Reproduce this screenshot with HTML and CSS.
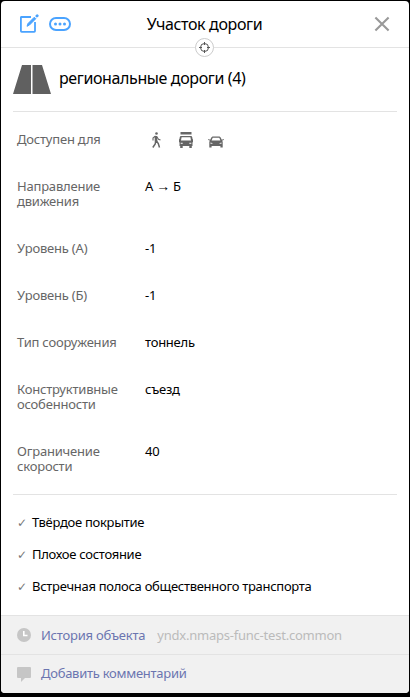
FILE: index.html
```
<!DOCTYPE html>
<html lang="ru">
<head>
<meta charset="utf-8">
<title>Участок дороги</title>
<link rel="stylesheet" href="styles.css">
</head>
<body>
<main class="card">
  <header class="header">
    <div class="actions">
      <svg width="20" height="20" viewBox="0 0 20 20" fill="none" stroke="#4aa3ff" stroke-width="1.800"><path d="M12 3H2.200Q1.900 3 1.900 3.400V17q0 .9.8.9h12.500q.8 0 .8-.9V8"/><path d="M8 12.300l1-2.800 6.300-6.300 1.500 1.500-6.300 6.300z" fill="#4aa3ff" stroke-width="1"/><path d="M17.900 2.100l.3-.3" stroke-width="2.800" stroke-linecap="round"/></svg>
      <svg width="22" height="14" viewBox="0 0 22 14"><rect x="1" y="1" width="20" height="12" rx="6" fill="none" stroke="#4aa3ff" stroke-width="2"/><g fill="#4aa3ff"><circle cx="6.500" cy="7" r="1.500"/><circle cx="11" cy="7" r="1.500"/><circle cx="15.500" cy="7" r="1.500"/></g></svg>
    </div>
    <h1 class="title">Участок дороги</h1>
    <svg class="close" width="16" height="16" viewBox="0 0 16 16" stroke="#999" stroke-width="2.100"><path d="M1.400 1.400l13.200 13.200M14.600 1.400L1.400 14.600"/></svg>
    <span class="locate"><svg width="11" height="11" viewBox="0 0 11 11" fill="none" stroke="#555"><circle cx="5.500" cy="5.500" r="4"/><path d="M5.500 0v3M5.500 8v3M0 5.500h3M8 5.500h3"/></svg></span>
  </header>

  <section class="category">
    <svg width="38" height="29" viewBox="0 0 38 29" fill="#606060"><path d="M9 0h9v29H0zM19.500 0H29l9 29H19.500z"/></svg>
    <h2 class="category-name">региональные дороги (4)</h2>
  </section>

  <dl class="attributes">
    <div class="row"><dt>Доступен для</dt><dd class="modes">
      <svg width="20" height="20" viewBox="0 0 20 20" fill="none" stroke="#666"><circle cx="10.500" cy="3.500" r="1.300" fill="#666" stroke="none"/><path d="M10 6v5.500" stroke-width="2.600"/><path d="M9.500 6L7 8v2.500M11 7l1.500 2.300 2 .7" stroke-width="1.100"/><path d="M9.700 11l-.5 3-2.400 3.500M10.500 11l1.800 2.500 1.200 4" stroke-width="1.500"/></svg>
      <svg width="20" height="20" viewBox="0 0 20 20" fill="#666"><path d="M4.500 2h11v2.500h-11zM5 6h10q1 0 1.200 1l.4 2.200h.4v3h-.5V16h-.7v2h-2.500v-2H6.700v2H4.200v-2h-.7v-3.800H3v-3h.4L3.800 7Q4 6 5 6z"/><path d="M5.600 7.300h8.800l.6 3.300H5z" fill="#fff"/><path d="M4.700 12.700h2v1.300h-2zM13.300 12.700h2v1.300h-2z" fill="#ddd"/></svg>
      <svg width="20" height="20" viewBox="0 0 20 20" fill="#666"><path d="M6.500 6.500h7l1 .7 1.300 2.500L17.800 9v1l-1.600.6.5 1.400v5.500h-2.300V16H5.600v1.500H3.300V12l.5-1.400L2.200 10V9l2 .7 1.300-2.500z"/><path d="M6.700 7.800h6.600l1.100 2.700H5.600z" fill="#fff"/><path d="M4.400 12.500l2 .4v1l-2-.2zM15.600 12.500l-2 .4v1l2-.2z" fill="#ddd"/></svg>
    </dd></div>
    <div class="row"><dt>Направление движения</dt><dd>А <span class="arrow">→</span> Б</dd></div>
    <div class="row"><dt>Уровень (А)</dt><dd>-1</dd></div>
    <div class="row"><dt>Уровень (Б)</dt><dd>-1</dd></div>
    <div class="row"><dt>Тип сооружения</dt><dd>тоннель</dd></div>
    <div class="row"><dt>Конструктивные особенности</dt><dd>съезд</dd></div>
    <div class="row"><dt>Ограничение скорости</dt><dd>40</dd></div>
  </dl>

  <ul class="flags">
    <li><span class="check">✓</span>Твёрдое покрытие</li>
    <li><span class="check">✓</span>Плохое состояние</li>
    <li><span class="check">✓</span>Встречная полоса общественного транспорта</li>
  </ul>

  <footer class="footer">
    <div class="footer-row">
      <svg width="14" height="14" viewBox="0 0 14 14"><circle cx="7" cy="7" r="7" fill="#c6c6c6"/><path d="M6.800 3v4.500H10.500" fill="none" stroke="#fff" stroke-width="1.600"/></svg>
      <a class="link">История объекта</a><span class="author">yndx.nmaps-func-test.common</span>
    </div>
    <div class="footer-row">
      <svg width="14" height="15" viewBox="0 0 14 15" fill="#c6c6c6"><path d="M1 0h12q1 0 1 1v9q0 1-1 1H8l-4 4v-4H1q-1 0-1-1V1q0-1 1-1z"/></svg>
      <a class="link comment">Добавить комментарий</a>
    </div>
  </footer>
</main>
</body>
</html>
```
FILE: styles.css
```
* { box-sizing: border-box; }
body {
  margin: 0;
  height: 697px;
  padding: 1px 1px 4px;
  background: #000;
  font: 13px/15px "Noto Sans", "DejaVu Sans", sans-serif;
  color: #000;
}
svg { display: block; flex: none; }
h1, h2, dl, dd, ul { margin: 0; padding: 0; font-weight: 400; }
.card {
  height: 692px;
  display: flex;
  flex-direction: column;
  background: #fff;
  border-radius: 4px;
  overflow: hidden;
}
.header {
  position: relative;
  height: 47px;
  flex: none;
  display: grid;
  grid-template-columns: 1fr auto 1fr;
  align-items: center;
  padding: 0 19px 0 18px;
  border-bottom: 1px solid #e3e3e3;
}
.actions { display: flex; align-items: center; gap: 10px; }
.title { font-size: 16px; line-height: 22px; letter-spacing: -0.36px; }
.close { justify-self: end; }
.locate {
  position: absolute;
  left: 194px;
  top: 37px;
  width: 19px;
  height: 19px;
  display: grid;
  place-items: center;
  background: #fff;
  border: 1px solid #ccc;
  border-radius: 50%;
}
.category {
  height: 64px;
  flex: none;
  display: flex;
  align-items: center;
  gap: 8px;
  margin: 0 12px;
  border-bottom: 1px solid #e3e3e3;
}
.category-name { padding-bottom: 3px; font-size: 16px; line-height: 22px; letter-spacing: -0.38px; }
.attributes {
  margin: 0 12px;
  padding: 20px 4px;
  display: flex;
  flex-direction: column;
  gap: 32px;
  border-bottom: 1px solid #e3e3e3;
}
.row { display: grid; grid-template-columns: 112px 1fr; column-gap: 16px; }
.row dt { color: #666; letter-spacing: -0.2px; }
.row dd { letter-spacing: -0.25px; }
.arrow { font-family: "Liberation Sans", sans-serif; font-size: 14px; line-height: 10px; }
.modes { height: 15px; display: flex; align-items: center; gap: 10px; padding-left: 1px; }
.flags {
  list-style: none;
  padding: 20px 16px;
  display: flex;
  flex-direction: column;
  gap: 17px;
  letter-spacing: -0.29px;
}
.flags li { display: flex; }
.check { width: 15px; color: #777; font-size: 12px; line-height: 17px; height: 15px; font-family: "DejaVu Sans", sans-serif; }
.footer { margin-top: auto; background: #f1f1f1; letter-spacing: -0.22px; }
.footer-row {
  height: 39px;
  display: flex;
  align-items: center;
  padding: 0 16px;
  border-top: 1px solid #e3e3e3;
}
.link { margin-left: 10px; color: #6b75b0; }
.comment { padding-bottom: 2px; letter-spacing: -0.27px; }
.author { margin-left: 12px; color: #bbb; }
```
